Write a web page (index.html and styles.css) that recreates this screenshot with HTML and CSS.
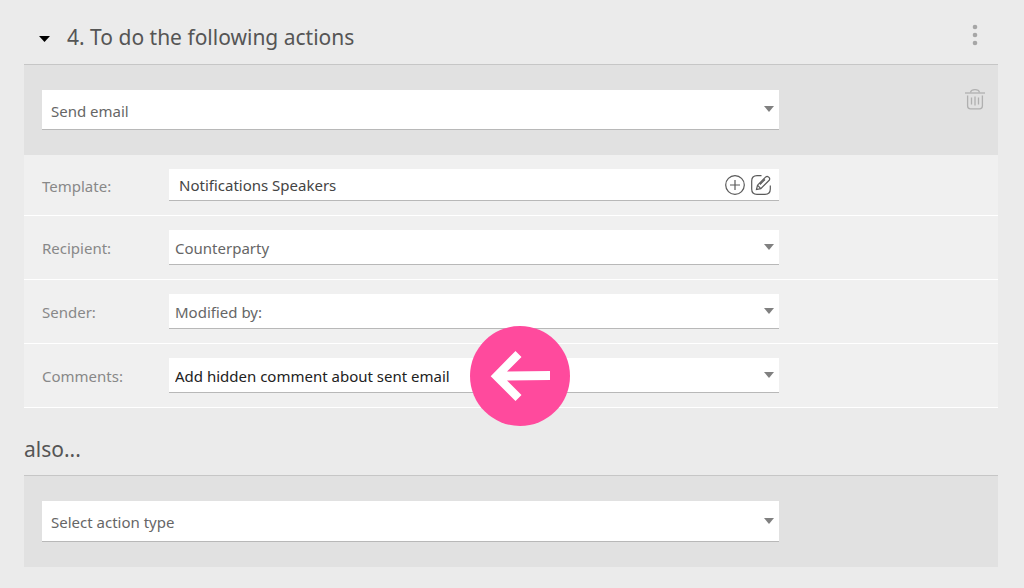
FILE: index.html
```html
<!DOCTYPE html>
<html lang="en">
<head>
    <meta charset="UTF-8">
    <meta name="viewport" content="width=device-width, initial-scale=1">
    <title>Actions</title>
    <link rel="stylesheet" href="styles.css">
</head>
<body>

<form class="actions">
    <header class="actions-header">
        <button type="button" class="icon-button toggle" aria-label="Collapse">
            <svg width="11" height="6" viewBox="0 0 11 6"><path d="M0 0h11L5.500 6z" fill="#000"/></svg>
        </button>
        <h2>4. To do the following actions</h2>
        <button type="button" class="icon-button more" aria-label="More">
            <svg width="6" height="22" viewBox="0 0 6 22" fill="#a6a6a6">
                <circle cx="3" cy="3" r="2.300"/>
                <circle cx="3" cy="11" r="2.300"/>
                <circle cx="3" cy="19" r="2.300"/>
            </svg>
        </button>
    </header>

    <div class="action-type">
        <div class="select action-select">
            <select aria-label="Action type">
                <option>Send email</option>
            </select>
        </div>
        <button type="button" class="icon-button delete" aria-label="Delete">
            <svg width="20" height="21" viewBox="0 0 20 21" fill="none" stroke="#b0b0b0" stroke-width="1.300">
                <path d="M0 4h20"/>
                <path d="M5.500 3.500C6 1.500 7.500.7 10 .7s4 .8 4.500 2.800"/>
                <path d="M2.600 6.500V17q0 2.800 2.800 2.800h9.200q2.800 0 2.800-2.800V6.500"/>
                <path d="M6.500 8.500v7M10 7.500v9M13.500 8.500v7"/>
            </svg>
        </button>
    </div>

    <div class="row">
        <label for="template">Template:</label>
        <div class="lookup">
            <input type="text" id="template" value="Notifications Speakers">
            <button type="button" class="icon-button" aria-label="Add template">
                <svg width="20" height="20" viewBox="0 0 20 20" fill="none" stroke="#5a5a5a" stroke-width="1.200">
                    <circle cx="10" cy="10" r="9.300"/>
                    <path d="M10 5v10M5 10h10"/>
                </svg>
            </button>
            <button type="button" class="icon-button" aria-label="Edit template">
                <svg width="20" height="20" viewBox="0 0 20 20" fill="none" stroke="#5a5a5a" stroke-width="1.200">
                    <path d="M10.500.7H6Q.7.7.7 6v8q0 5.300 5.300 5.300h8q5.300 0 5.300-5.300v-3.500"/>
                    <path d="M5.500 14.500l1-4.300 8.300-8.300q1.300-1 2.600 0l.8.8q1 1.300 0 2.600l-8.400 8.300zM6.500 10.200l3.300 3.400M14 4.500l-5 5"/>
                </svg>
            </button>
        </div>
    </div>

    <div class="row">
        <label for="recipient">Recipient:</label>
        <div class="select">
            <select id="recipient">
                <option>Counterparty</option>
            </select>
        </div>
    </div>

    <div class="row">
        <label for="sender">Sender:</label>
        <div class="select">
            <select id="sender">
                <option>Modified by:</option>
            </select>
        </div>
    </div>

    <div class="row">
        <label for="comments">Comments:</label>
        <div class="select">
            <select id="comments" class="changed">
                <option>Add hidden comment about sent email</option>
            </select>
            <svg class="pointer" width="100" height="100" viewBox="0 0 100 100">
                <circle cx="50" cy="50" r="50" fill="#ff4a9d"/>
                <path d="M20.700 50.200L45.500 25l6 6L37 45.500l43-.5v9l-43 .5 14.500 14.500-6 6z" fill="#fff"/>
            </svg>
        </div>
    </div>

    <h2 class="also">also...</h2>

    <div class="action-type">
        <div class="select action-select new-action">
            <select aria-label="New action type">
                <option>Select action type</option>
            </select>
        </div>
    </div>
</form>

</body>
</html>
```
FILE: styles.css
```css
* {
    box-sizing: border-box;
}

body {
    margin: 0;
    background: #ebebeb;
    color: #555;
    font-family: "Noto Sans", "Open Sans", sans-serif;
    font-size: 15px;
}

input, select {
    font: inherit;
    color: #666;
    background: #fff;
    border: none;
    border-radius: 0;
    outline: none;
}

h2 {
    margin: 0;
    font-size: 21px;
    line-height: 32px;
    font-weight: normal;
}

.actions {
    padding: 0 26px 20px 24px;
}

.actions-header {
    display: flex;
    align-items: center;
    height: 64px;
    padding: 10px 20px 0 15px;
}

.icon-button {
    display: flex;
    padding: 0;
    border: none;
    background: none;
    cursor: pointer;
}

.toggle {
    margin: 4px 17px 0 0;
}

.more {
    margin: 0 0 4px auto;
}

.action-type {
    display: flex;
    justify-content: space-between;
    align-items: flex-start;
    padding: 25px 13px 25px 18px;
    background: #e1e1e1;
    border-top: 1px solid #c6c6c6;
}

.delete {
    margin-top: -1px;
}

.row {
    display: flex;
    align-items: center;
    padding: 14px 18px;
    background: #f0f0f0;
    border-bottom: 1px solid #fff;
}

.row label {
    width: 127px;
    padding-top: 1px;
    color: #888;
}

.select {
    position: relative;
    flex: 1;
    max-width: 610px;
    height: 35px;
}

.select select {
    display: block;
    width: 100%;
    height: 100%;
    padding: 2px 30px 0 6px;
    border-bottom: 1px solid #b8b8b8;
    appearance: none;
}

.select .changed {
    color: #222;
}

.select::after {
    content: "";
    position: absolute;
    right: 5px;
    top: calc(50% - 4px);
    border: 5px solid transparent;
    border-top: 6px solid #808080;
    border-bottom: none;
    pointer-events: none;
}

.action-select {
    max-width: 737px;
    height: 40px;
}

.action-select select {
    padding-left: 9px;
}

.new-action {
    height: 41px;
}

.lookup {
    display: flex;
    flex: 1;
    align-items: center;
    gap: 6px;
    max-width: 610px;
    height: 32px;
    padding: 0 8px 0 10px;
    background: #fff;
    border-bottom: 1px solid #b8b8b8;
}

.lookup input {
    flex: 1;
    min-width: 0;
    padding: 0;
    color: #444;
}

.pointer {
    position: absolute;
    left: 301px;
    top: -32px;
    z-index: 1;
}

.also {
    padding: 25px 0 10px;
}
```
